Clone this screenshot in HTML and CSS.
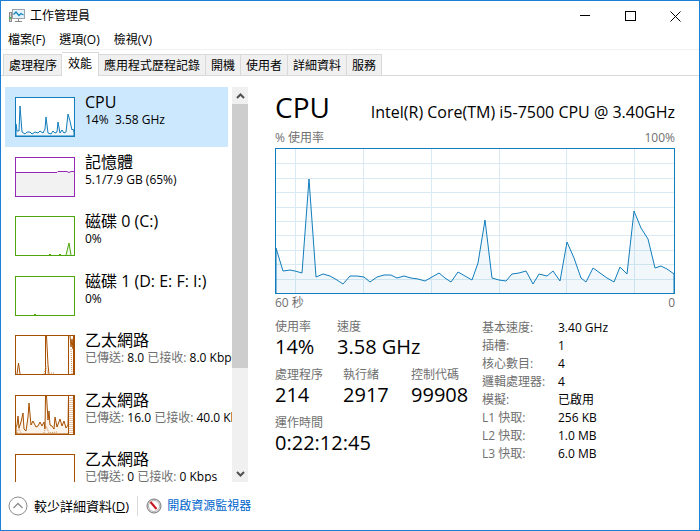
FILE: index.html
```html
<!DOCTYPE html>
<html lang="zh-Hant">
<head>
  <meta charset="UTF-8">
  <meta name="viewport" content="width=device-width, initial-scale=1.0">
  <title>工作管理員</title>
  <link rel="stylesheet" href="styles.css">
</head>
<body>
  <div class="window">
    <header class="titlebar">
      <svg class="app-icon" width="16" height="14" viewBox="0 0 16 14">
        <rect x="0.5" y="3.5" width="2" height="9" fill="#d8d8d8" stroke="#8a8a8a"/>
        <rect x="0" y="8" width="2" height="2" fill="#4caf50"/>
        <rect x="3.5" y="0.5" width="12" height="9" fill="#e4f3fb" stroke="#9aa4aa"/>
        <path d="M4.500 5.500 L7 3 L10 6.500 L12 4.500 L14.500 6" fill="none" stroke="#1787c0" stroke-width="1.300"/>
        <path d="M9.500 10 V12 M6 12.500 H13" stroke="#8a8a8a"/>
      </svg>
      <span class="title">工作管理員</span>
      <button class="win-btn" aria-label="最小化"><svg width="11" height="11"><path d="M0 4.500 H10"/></svg></button>
      <button class="win-btn" aria-label="最大化"><svg width="11" height="11"><rect x="0.500" y="0.500" width="10" height="9"/></svg></button>
      <button class="win-btn" aria-label="關閉"><svg width="11" height="11"><path d="M0.500 0.500 L10.500 10.500 M10.500 0.500 L0.500 10.500"/></svg></button>
    </header>

    <nav class="menu">
      <button>檔案(F)</button>
      <button>選項(O)</button>
      <button>檢視(V)</button>
    </nav>

    <nav class="tabs">
      <button class="tab">處理程序</button>
      <button class="tab active">效能</button>
      <button class="tab">應用程式歷程記錄</button>
      <button class="tab">開機</button>
      <button class="tab">使用者</button>
      <button class="tab">詳細資料</button>
      <button class="tab">服務</button>
    </nav>

    <main class="content">
      <section class="sidebar">
        <ul class="resources">
          <li class="resource selected">
            <svg class="thumb cpu" viewBox="0 0 60 40">
              <path class="area" d="M1 27 L2 34 L4 34 L5 9 L7 35 L10 37 L12 35 L15 35 L17 37 L20 35 L23 36 L25 34 L28 36 L30 32 L31 20 L33 36 L36 37 L38 34 L40 36 L42 35 L43 25 L45 36 L47 33 L49 36 L51 35 L53 17 L55 24 L57 33 L58 32 L59 35 V39 H1 Z"/>
              <rect class="frame" x="0.5" y="0.5" width="59" height="39"/>
            </svg>
            <div class="info">
              <div class="name">CPU</div>
              <div class="detail">14%&nbsp; 3.58 GHz</div>
            </div>
          </li>
          <li class="resource">
            <svg class="thumb memory" viewBox="0 0 60 40">
              <path class="area" d="M0 15.500 H42 L43 14.500 H52 L54 15.500 L56 14.500 H60 V40 H0 Z"/>
              <rect class="frame" x="0.5" y="0.5" width="59" height="39"/>
            </svg>
            <div class="info">
              <div class="name">記憶體</div>
              <div class="detail">5.1/7.9 GB (65%)</div>
            </div>
          </li>
          <li class="resource">
            <svg class="thumb disk" viewBox="0 0 60 40">
              <path class="area" d="M34 39 L35 38 L36 39 M44 39 L45 38 L46 39 M51 39 L54 27 L56 39"/>
              <rect class="frame" x="0.5" y="0.5" width="59" height="39"/>
            </svg>
            <div class="info">
              <div class="name">磁碟 0 (C:)</div>
              <div class="detail">0%</div>
            </div>
          </li>
          <li class="resource">
            <svg class="thumb disk" viewBox="0 0 60 40">
              <path class="area" d="M19 39 L20 38 L21 39"/>
              <rect class="frame" x="0.5" y="0.5" width="59" height="39"/>
            </svg>
            <div class="info">
              <div class="name">磁碟 1 (D: E: F: I:)</div>
              <div class="detail">0%</div>
            </div>
          </li>
          <li class="resource">
            <svg class="thumb network" viewBox="0 0 60 40">
              <path class="area" d="M2 39 L3.500 28 L5 39 M30.500 39 V1 L31.500 1 L33 30 L34 39 M53.500 39 V1 M55 1 L56 12 L57 4 L58 14 L58.500 1 V39"/>
              <path class="dots" d="M29 39 L31 31 L33 39 M36 38 H39 M56 14 L57 39"/>
              <rect class="frame" x="0.5" y="0.5" width="59" height="39"/>
            </svg>
            <div class="info">
              <div class="name">乙太網路</div>
              <div class="detail"><span>已傳送:</span> 8.0 <span>已接收:</span> 8.0 Kbps</div>
            </div>
          </li>
          <li class="resource">
            <svg class="thumb network" viewBox="0 0 60 40">
              <path class="area filled" d="M1 32 L2 30 L3 21 L4 33 L6 27 L8 18 L9 34 L11 36 L13 22 L14 8 L16 30 L18 26 L20 30 L21 32 L23 31 L25 27 L27 31 L29 27 L30 34 L30.500 1 L31.500 1 L33 25 L34 16 L35 30 L37 31 L39 34 L40 22 L42 32 L45 24 L47 31 L49 26 L51 33 L53 30 L53.500 1 V39 H1 Z"/>
              <path class="area" d="M58.500 1 V39"/>
              <path class="dots" d="M2 38 L4 33 L6 38 M29 38 L31 31 L34 38 L42 37 M55 38 V3 M57 3 V38"/>
              <rect class="frame" x="0.5" y="0.5" width="59" height="39"/>
            </svg>
            <div class="info">
              <div class="name">乙太網路</div>
              <div class="detail"><span>已傳送:</span> 16.0 <span>已接收:</span> 40.0 Kbps</div>
            </div>
          </li>
          <li class="resource">
            <svg class="thumb network" viewBox="0 0 60 40">
              <rect class="frame" x="0.5" y="0.5" width="59" height="39"/>
            </svg>
            <div class="info">
              <div class="name">乙太網路</div>
              <div class="detail"><span>已傳送:</span> 0 <span>已接收:</span> 0 Kbps</div>
            </div>
          </li>
        </ul>
        <div class="scrollbar">
          <button class="scroll-btn" aria-label="向上捲動"><svg width="9" height="6"><path d="M1 5 L4.500 1.500 L8 5"/></svg></button>
          <div class="scroll-thumb"></div>
          <div class="scroll-track"></div>
          <button class="scroll-btn" aria-label="向下捲動"><svg width="9" height="6"><path d="M1 1 L4.500 4.500 L8 1"/></svg></button>
        </div>
      </section>

      <section class="details">
        <div class="heading">
          <h1>CPU</h1>
          <h2>Intel(R) Core(TM) i5-7500 CPU @ 3.40GHz</h2>
        </div>
        <div class="axis"><span>% 使用率</span><span>100%</span></div>
        <svg class="chart" viewBox="0 0 400 146" preserveAspectRatio="none">
          <path class="grid" d="M20.500 0 V146 M88.500 0 V146 M156.500 0 V146 M224.500 0 V146 M291.500 0 V146 M359.500 0 V146 M0 15.500 H400 M0 30.500 H400 M0 44.500 H400 M0 59.500 H400 M0 73.500 H400 M0 87.500 H400 M0 102.500 H400 M0 116.500 H400 M0 131.500 H400"/>
          <path class="usage" d="M1 100 L8 123 L15 122 L20 123 L27 125 L34 31 L41 129 L48 126 L55 128 L62 132 L68 136 L75 128 L82 128 L89 129 L95 134 L102 129 L109 127 L116 127 L122 130 L129 128 L136 130 L143 131 L150 133 L157 129 L164 125 L170 130 L176 134 L183 124 L190 128 L197 132 L203 115 L210 72 L217 130 L224 132 L231 133 L237 126 L244 125 L251 123 L258 136 L264 126 L272 128 L278 123 L285 133 L292 94 L299 110 L306 130 L311 134 L318 120 L332 130 L339 134 L345 119 L352 126 L359 63 L366 80 L373 91 L380 120 L386 118 L392 121 L399 126 V146 H1 Z"/>
          <rect class="frame" x="0.5" y="0.5" width="399" height="145"/>
        </svg>
        <div class="axis time"><span>60 秒</span><span>0</span></div>

        <div class="numbers">
          <div class="stats">
            <div class="stat-row">
              <div class="stat narrow"><div class="label">使用率</div><div class="value">14%</div></div>
              <div class="stat"><div class="label">速度</div><div class="value">3.58 GHz</div></div>
            </div>
            <div class="stat-row">
              <div class="stat"><div class="label">處理程序</div><div class="value">214</div></div>
              <div class="stat"><div class="label">執行緒</div><div class="value">2917</div></div>
              <div class="stat"><div class="label">控制代碼</div><div class="value">99908</div></div>
            </div>
            <div class="stat-row">
              <div class="stat"><div class="label">運作時間</div><div class="value">0:22:12:45</div></div>
            </div>
          </div>
          <table class="specs">
            <tr><th scope="row">基本速度:</th><td>3.40 GHz</td></tr>
            <tr><th scope="row">插槽:</th><td>1</td></tr>
            <tr><th scope="row">核心數目:</th><td>4</td></tr>
            <tr><th scope="row">邏輯處理器:</th><td>4</td></tr>
            <tr><th scope="row">模擬:</th><td>已啟用</td></tr>
            <tr><th scope="row">L1 快取:</th><td>256 KB</td></tr>
            <tr><th scope="row">L2 快取:</th><td>1.0 MB</td></tr>
            <tr><th scope="row">L3 快取:</th><td>6.0 MB</td></tr>
          </table>
        </div>
      </section>
    </main>

    <footer class="footer">
      <button class="fewer">
        <svg width="20" height="20" viewBox="0 0 20 20" fill="none">
          <circle cx="10" cy="10" r="9" stroke="#8c8c8c"/>
          <path d="M5.500 12 L10 7.500 L14.500 12" stroke="#8c8c8c" stroke-width="1.300"/>
        </svg>
        <span>較少詳細資料(<u>D</u>)</span>
      </button>
      <a class="monitor" href="#">
        <svg width="16" height="16" viewBox="0 0 16 16">
          <circle cx="8" cy="8" r="7" fill="#e4e4e4" stroke="#777"/>
          <circle cx="8" cy="8" r="5.500" fill="#fff" stroke="#b4b4b4"/>
          <path d="M4.500 4 L10.500 11" stroke="#c8141e" stroke-width="2"/>
        </svg>
        <span>開啟資源監視器</span>
      </a>
    </footer>
  </div>
</body>
</html>
```

FILE: styles.css
```css
:root {
  --accent: #117dbb;
  --window-border: #1c7fd6;
  --muted: #707070;
  --line: #d9d9d9;
}

* {
  box-sizing: border-box;
}

body {
  margin: 0;
  font-family: "Open Sans", "Noto Sans CJK TC", sans-serif;
  font-size: 12px;
  line-height: 16px;
  color: #000;
  background: #fff;
}

button {
  padding: 0;
  border: 0;
  background: none;
  font: inherit;
  color: inherit;
}

.window {
  display: flex;
  flex-direction: column;
  height: 100vh;
  border: 1px solid var(--window-border);
}

/* title bar */
.titlebar {
  display: flex;
  align-items: center;
  height: 30px;
  padding: 0 1px 0 8px;
}

.title {
  flex: 1;
  margin-left: 5px;
}

.win-btn {
  display: flex;
  align-items: center;
  justify-content: center;
  width: 45px;
  height: 30px;
}

.win-btn svg {
  fill: none;
  stroke: #000;
}

.menu {
  display: flex;
  gap: 14px;
  height: 19px;
  padding: 0 7px;
  border-bottom: 1px solid #f0f0f0;
}

/* tabs */
.tabs {
  display: flex;
  align-items: flex-end;
  height: 26px;
  padding-left: 2px;
  border-bottom: 1px solid var(--line);
}

.tab {
  height: 21px;
  padding: 1px 5px 0;
  border: solid var(--line);
  border-width: 1px 1px 0 0;
  background: #f0f0f0;
  white-space: nowrap;
}

.tab:first-child {
  padding-right: 4px;
  border-left-width: 1px;
}

.tab.active {
  height: 24px;
  margin-bottom: -1px;
  padding: 0 6px 2px;
  background: #fff;
}

.content {
  display: flex;
  flex: 1;
  min-height: 0;
  padding: 11px 24px 0 4px;
}

/* resource list */
.sidebar {
  display: flex;
  flex: none;
  width: 243px;
}

.resources {
  flex: 1;
  min-width: 0;
  margin: 0;
  padding: 0;
  overflow: hidden;
  list-style: none;
}

.resource {
  display: flex;
  gap: 10px;
  height: 60px;
  padding: 10px 0 0 10px;
}

.resource:nth-child(even) {
  height: 59px;
}

.resource.selected {
  margin-right: 4px;
  background: #cce8ff;
}

.thumb {
  flex: none;
  width: 60px;
  height: 40px;
  background: #fff;
  fill: none;
}

.cpu { stroke: var(--accent); }
.memory { stroke: #9528b4; }
.disk { stroke: #4da60c; }
.network { stroke: #a74f01; }

.cpu .area { fill: #f1f6fa; }
.memory .area { fill: #f2f2f2; }
.disk .area { fill: #eff7e9; }
.network .filled { fill: #fcf3eb; }
.network .dots { stroke-dasharray: 1 1; stroke: #d08a4c; }

.info {
  flex: 1;
  min-width: 0;
  margin-top: -5px;
  white-space: nowrap;
}

.name {
  font-size: 16px;
  line-height: 20px;
}

.detail span {
  color: var(--muted);
}

.scrollbar {
  display: flex;
  flex-direction: column;
  width: 16px;
  background: #f0f0f0;
}

.scroll-btn {
  display: flex;
  align-items: center;
  justify-content: center;
  height: 17px;
}

.scroll-btn svg {
  fill: none;
  stroke: #505050;
  stroke-width: 2;
}

.scroll-thumb {
  flex: 264;
  background: #cdcdcd;
}

.scroll-track {
  flex: 97;
}

/* details pane */
.details {
  flex: 1;
  min-width: 0;
  padding-left: 27px;
}

.heading {
  display: flex;
  align-items: baseline;
  justify-content: space-between;
  height: 43px;
}

h1,
h2 {
  margin: 0;
  font-weight: 400;
  white-space: nowrap;
}

h1 {
  font-size: 28px;
  line-height: 40px;
}

h2 {
  font-size: 16px;
}

.axis {
  display: flex;
  justify-content: space-between;
  height: 18px;
  color: var(--muted);
}

.axis.time {
  padding-top: 1px;
}

.chart {
  display: block;
  width: 100%;
  height: 146px;
}

.chart .grid {
  stroke: #d9eaf4;
}

.chart .usage {
  fill: rgba(17, 125, 187, 0.06);
  stroke: var(--accent);
}

.chart .frame {
  fill: none;
  stroke: var(--accent);
}

.numbers {
  display: flex;
  justify-content: space-between;
  padding-top: 7px;
}

.stat-row {
  display: flex;
  gap: 20px;
  height: 48px;
}

.stat {
  min-width: 48px;
  white-space: nowrap;
}

.stat.narrow {
  min-width: 42px;
}

.label {
  color: var(--muted);
}

.value {
  font-size: 20px;
  line-height: 24px;
}

.specs {
  width: 193px;
  border-spacing: 0;
  align-self: flex-start;
}

.specs th,
.specs td {
  height: 18px;
  padding: 0;
  text-align: left;
  font-weight: 400;
  white-space: nowrap;
}

.specs th {
  width: 76px;
  color: var(--muted);
}

/* footer */
.footer {
  display: flex;
  align-items: center;
  height: 48px;
  padding-left: 7px;
}

.fewer,
.monitor {
  display: flex;
  align-items: center;
}

.fewer {
  gap: 6px;
  padding-right: 8px;
  border-right: 1px solid var(--line);
  font-size: 13px;
}

.monitor {
  gap: 5px;
  padding-left: 8px;
  color: #0066cc;
  text-decoration: none;
}
```
